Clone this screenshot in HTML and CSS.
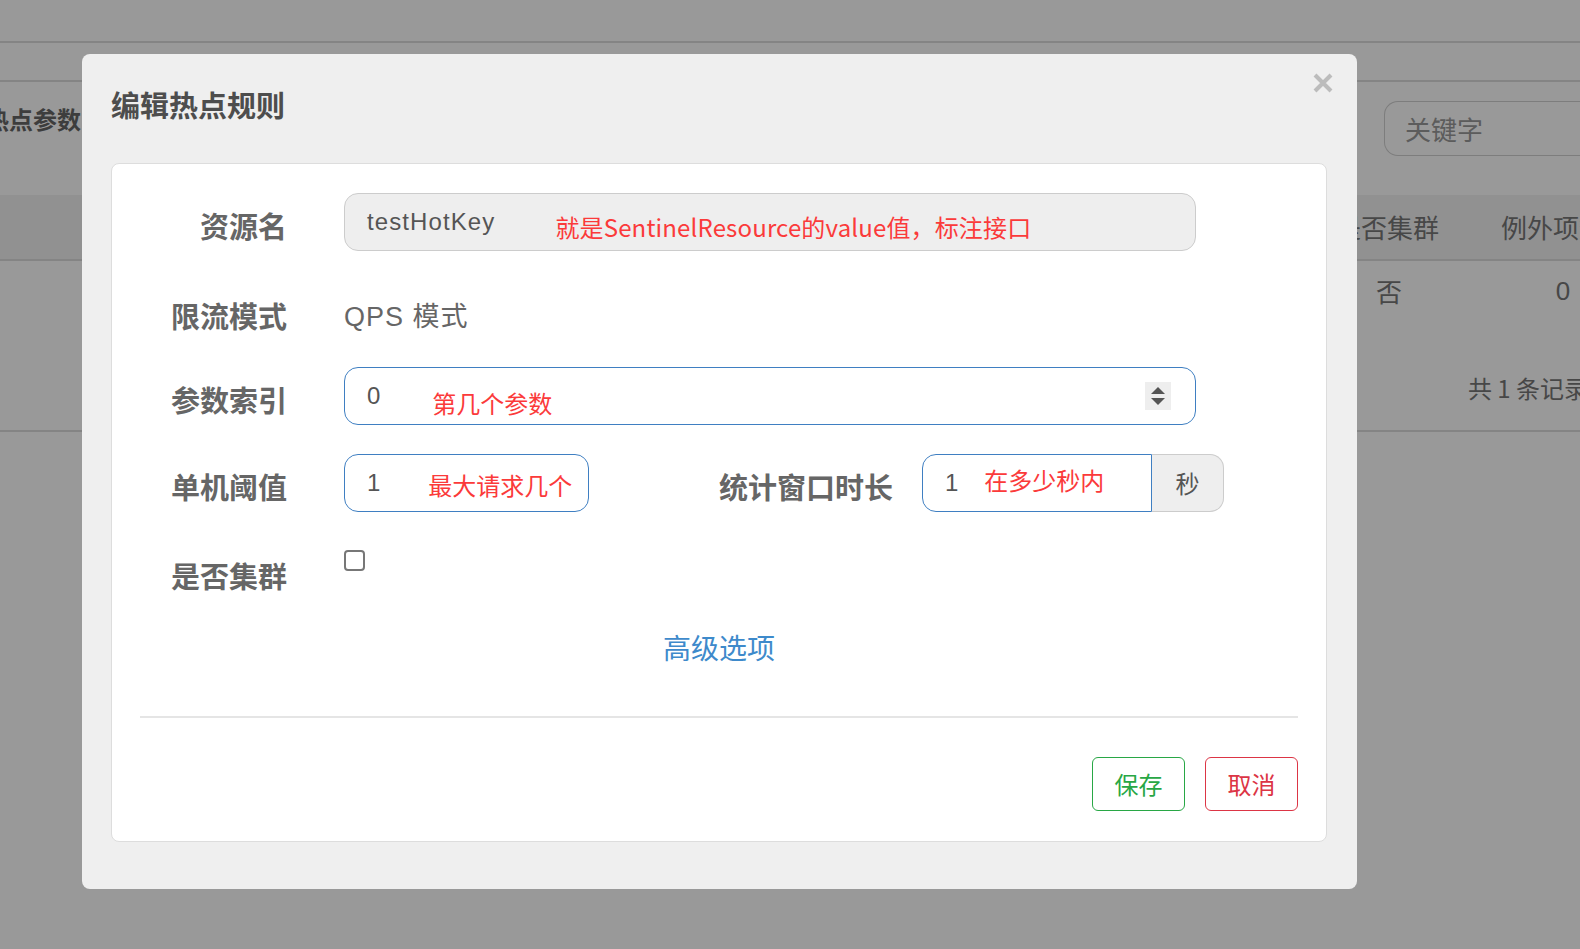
FILE: index.html
```html
<!DOCTYPE html>
<html lang="zh-CN">
<head>
<meta charset="utf-8">
<title>编辑热点规则</title>
<link rel="stylesheet" href="styles.css">
</head>
<body>
<div class="page">
  <div class="topbar"></div>
  <div class="subbar"></div>
  <div class="toolbar">
    <h2 class="page-title">热点参数限流规则</h2>
    <div class="search">关键字</div>
  </div>
  <div class="table">
    <div class="thead">
      <span></span><span class="col-cluster">是否集群</span><span>例外项数</span>
    </div>
    <div class="trow">
      <span></span><span class="col-cluster">否</span><span class="num">0</span>
    </div>
    <div class="tfoot"><span>共 1 条记录</span></div>
  </div>
</div>

<div class="overlay"></div>

<div class="modal">
  <button class="close" type="button" aria-label="关闭">
    <svg width="20" height="20" viewBox="0 0 20 20"><path d="M2 2 L18 18 M18 2 L2 18" stroke="#bcbcbc" stroke-width="4" fill="none"/></svg>
  </button>
  <h3 class="modal-title">编辑热点规则</h3>
  <div class="card">
    <div class="row">
      <label class="label">资源名</label>
      <div class="field field-disabled">
        <span class="value value-res">testHotKey</span>
        <span class="note note-res">就是SentinelResource的value值，标注接口</span>
      </div>
    </div>
    <div class="row row-static">
      <label class="label">限流模式</label>
      <div class="static">QPS 模式</div>
    </div>
    <div class="row">
      <label class="label">参数索引</label>
      <div class="field field-active">
        <span class="value">0</span>
        <span class="note note-idx">第几个参数</span>
        <span class="spin"><i class="tri-up"></i><i class="tri-down"></i></span>
      </div>
    </div>
    <div class="row row-split">
      <label class="label">单机阈值</label>
      <div class="split">
        <div class="field field-active field-sm">
          <span class="value">1</span>
          <span class="note note-thr">最大请求几个</span>
        </div>
        <label class="label label-inline">统计窗口时长</label>
        <div class="group">
          <div class="field field-active field-group">
            <span class="value">1</span>
            <span class="note note-win">在多少秒内</span>
          </div>
          <span class="addon">秒</span>
        </div>
      </div>
    </div>
    <div class="row row-check">
      <label class="label">是否集群</label>
      <div><span class="check"></span></div>
    </div>
    <div class="advanced">高级选项</div>
    <div class="divider"></div>
    <div class="actions">
      <button class="btn btn-save" type="button">保存</button>
      <button class="btn btn-cancel" type="button">取消</button>
    </div>
  </div>
</div>
</body>
</html>
```

FILE: styles.css
```css
html, body {
  margin: 0;
  padding: 0;
}
body {
  width: 1580px;
  height: 949px;
  overflow: hidden;
  background: #fff;
  font-family: "Noto Sans CJK SC", "Liberation Sans", sans-serif;
}

/* ---------- background page ---------- */
.page {
  width: 1640px;
  color: #777;
}
.topbar {
  height: 41px;
  border-bottom: 2px solid #ddd;
}
.subbar {
  height: 37px;
  border-bottom: 2px solid #ddd;
}
.toolbar {
  height: 113px;
  display: flex;
  justify-content: space-between;
  align-items: flex-start;
}
.page-title {
  margin: 0 0 0 -15px;
  padding-top: 19px;
  font-size: 24px;
  line-height: 36px;
  font-weight: bold;
  color: #666;
}
.search {
  margin-top: 19px;
  width: 256px;
  height: 55px;
  box-sizing: border-box;
  border: 1px solid #d0d0d0;
  border-right: 0;
  border-radius: 14px 0 0 14px;
  padding-left: 20px;
  font-size: 26px;
  line-height: 53px;
  color: #999;
}
.thead, .trow {
  display: grid;
  grid-template-columns: 1fr 166px 174px;
  text-align: center;
  font-size: 26px;
}
.thead {
  height: 64px;
  line-height: 64px;
  background: #f2f2f2;
  border-bottom: 2px solid #ddd;
}
.thead .col-cluster {
  padding-left: 8px;
}
.trow {
  height: 60px;
  line-height: 60px;
}
.trow .col-cluster {
  padding-left: 12px;
}
.trow .num {
  padding-left: 20px;
  font-family: "Liberation Sans", sans-serif;
}
.tfoot {
  margin-top: 47px;
  padding: 0 52px 22px 0;
  display: flex;
  justify-content: flex-end;
  font-size: 24px;
  line-height: 40px;
  border-bottom: 2px solid #ddd;
}

/* ---------- overlay & modal ---------- */
.overlay {
  position: fixed;
  inset: 0;
  background: rgba(0, 0, 0, 0.4);
}
.modal {
  position: fixed;
  left: 82px;
  top: 54px;
  width: 1275px;
  box-sizing: border-box;
  padding: 30px 30px 47px 29px;
  background: #efefef;
  border-radius: 8px;
}
.close {
  position: absolute;
  right: 24px;
  top: 19px;
  width: 20px;
  height: 20px;
  padding: 0;
  border: 0;
  background: none;
  display: flex;
}
.modal-title {
  margin: 0 0 39px;
  font-size: 29px;
  line-height: 40px;
  font-weight: bold;
  color: #4d4d4d;
}
.card {
  background: #fff;
  border: 1px solid #ddd;
  border-radius: 8px;
  padding: 29px 28px 30px;
}

/* ---------- form rows ---------- */
.row {
  display: grid;
  grid-template-columns: 145px 852px;
  column-gap: 59px;
  height: 58px;
  margin-bottom: 29px;
  align-items: start;
}
.row-split {
  grid-template-columns: 145px 880px;
}
.label {
  text-align: right;
  font-size: 29px;
  line-height: 40px;
  font-weight: bold;
  color: #666;
  padding-top: 12px;
  margin-right: -2px;
  white-space: nowrap;
}
.row-static .label {
  padding-top: 15px;
}
.row-check .label {
  padding-top: 14px;
}
.static {
  padding-top: 17px;
  font-family: "Liberation Sans", "Noto Sans CJK SC", sans-serif;
  font-size: 27px;
  line-height: 40px;
  letter-spacing: 1px;
  color: #666;
}
.field {
  height: 58px;
  box-sizing: border-box;
  display: flex;
  align-items: center;
  padding: 0 24px 0 22px;
  border: 1px solid #ccc;
  border-radius: 14px;
  font-family: "Liberation Sans", sans-serif;
  font-size: 24px;
  color: #555;
}
.field-disabled {
  background: #eee;
}
.field-active {
  border-color: #3f7fc2;
  background: #fff;
}
.value-res {
  letter-spacing: 1.1px;
}
.note {
  font-family: "Noto Sans CJK SC", sans-serif;
  font-size: 24px;
  color: #fb3a3a;
  white-space: nowrap;
}
.note-res {
  margin-left: 60px;
  margin-top: 8px;
  letter-spacing: 0.15px;
}
.note-idx {
  margin-left: 52px;
  margin-top: 12px;
}
.note-thr {
  margin-left: 48px;
  margin-top: 2px;
}
.note-win {
  margin-left: 26px;
  margin-top: -8px;
}
.spin {
  margin-left: auto;
  width: 26px;
  height: 28px;
  background: #eee;
  display: flex;
  flex-direction: column;
  align-items: center;
  justify-content: center;
  gap: 4px;
}
.tri-up, .tri-down {
  width: 0;
  height: 0;
  border-left: 7px solid transparent;
  border-right: 7px solid transparent;
}
.tri-up {
  border-bottom: 7px solid #555;
}
.tri-down {
  border-top: 7px solid #555;
}
.split {
  display: flex;
  align-items: flex-start;
}
.field-sm {
  width: 245px;
}
.label-inline {
  flex: 1;
  margin-right: 29px;
}
.group {
  display: flex;
  width: 302px;
}
.field-group {
  width: 230px;
  border-radius: 14px 0 0 14px;
}
.addon {
  width: 72px;
  height: 58px;
  box-sizing: border-box;
  background: #eee;
  border: 1px solid #ccc;
  border-left: 0;
  border-radius: 0 14px 14px 0;
  text-align: center;
  font-size: 24px;
  line-height: 56px;
  color: #555;
}
.check {
  display: block;
  width: 21px;
  height: 21px;
  margin-top: 9px;
  box-sizing: border-box;
  border: 2px solid #777;
  border-radius: 4px;
  background: #fff;
}

/* ---------- bottom ---------- */
.advanced {
  text-align: center;
  font-size: 28px;
  line-height: 38px;
  color: #3e8acb;
}
.divider {
  height: 2px;
  margin-top: 50px;
  background: #e5e5e5;
}
.actions {
  display: flex;
  justify-content: flex-end;
  gap: 20px;
  margin-top: 39px;
}
.btn {
  width: 93px;
  height: 54px;
  padding: 0 0 2px;
  background: #fff;
  border: 1px solid;
  border-radius: 6px;
  font-family: "Noto Sans CJK SC", sans-serif;
  font-size: 24px;
}
.btn-save {
  color: #28a745;
  border-color: #28a745;
}
.btn-cancel {
  color: #dc3545;
  border-color: #dc3545;
}
```
